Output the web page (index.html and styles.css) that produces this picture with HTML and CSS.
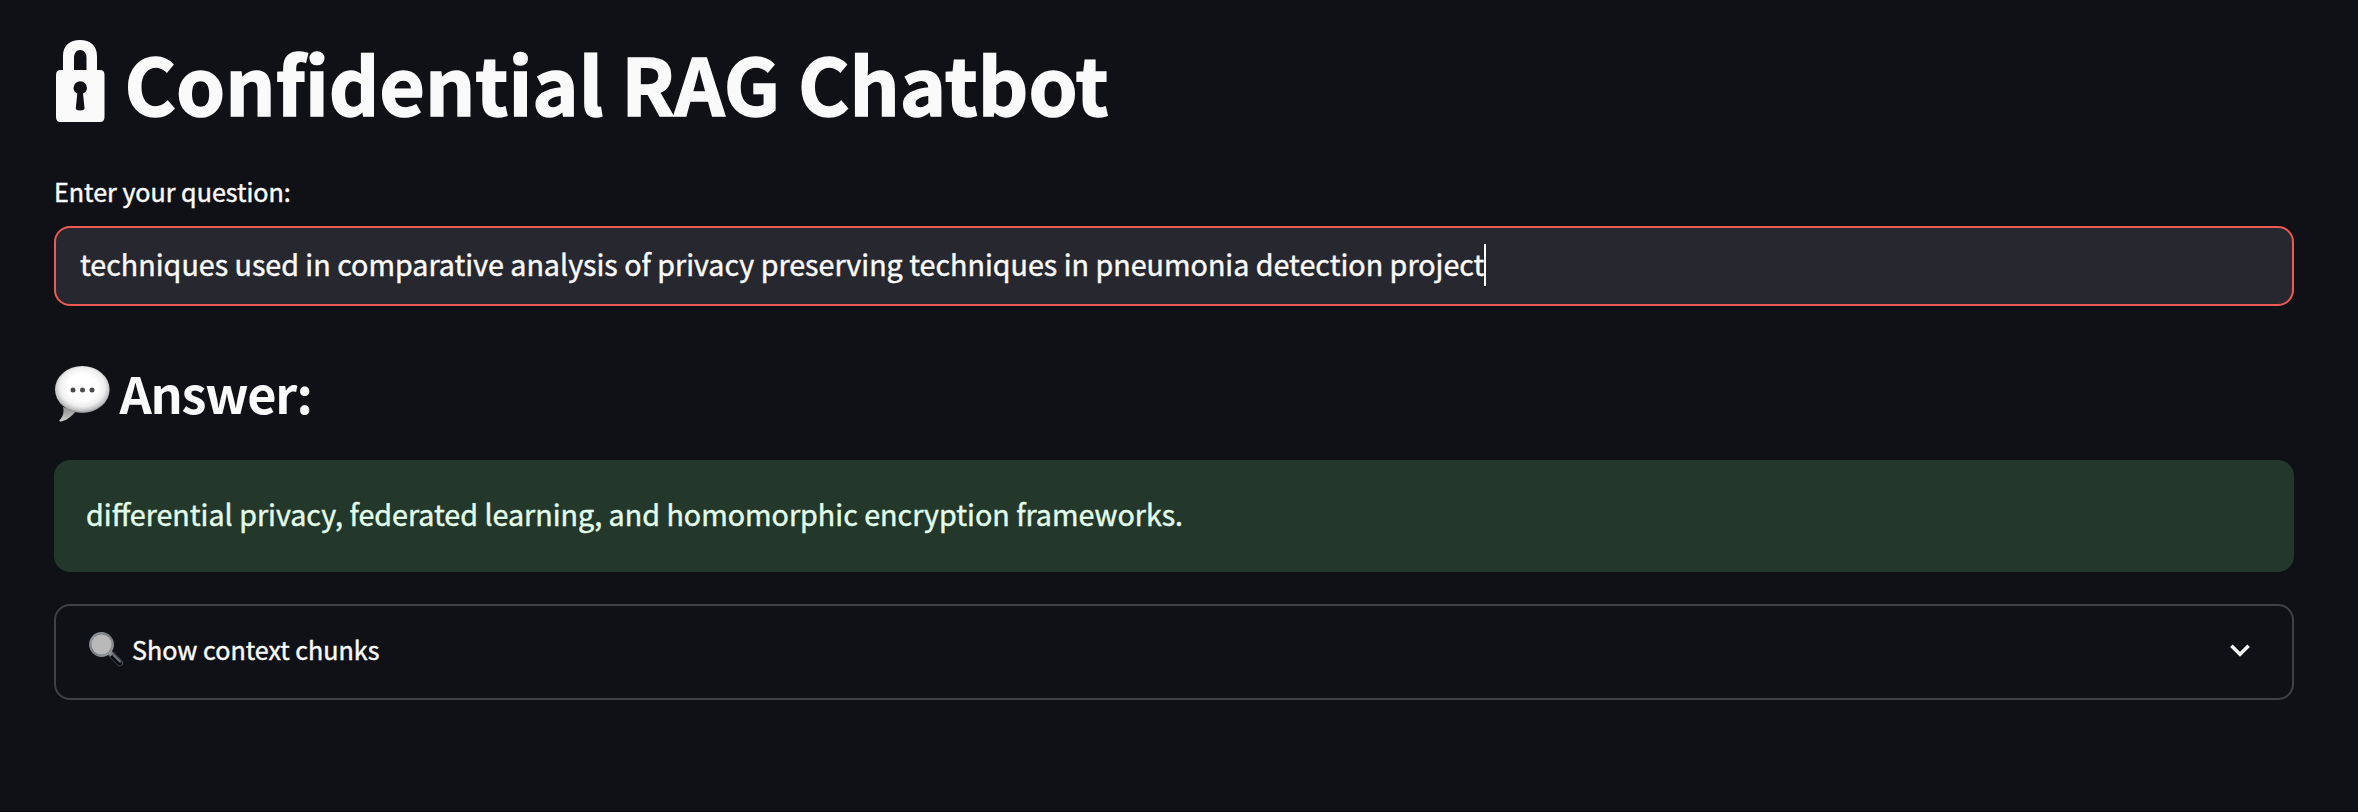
FILE: index.html
```html
<!DOCTYPE html>
<html lang="en">
<head>
<meta charset="utf-8">
<title>Confidential RAG Chatbot</title>
<link rel="stylesheet" href="styles.css">
</head>
<body>
<main class="page">
  <h1 class="title">
    <svg class="lock" viewBox="0 0 50 84" aria-hidden="true">
      <path fill="currentColor" fill-rule="evenodd" d="M8 31V17C8 6.500 15 1 25 1S42 6.500 42 17V31H45Q49.500 31 49.500 36V78Q49.500 83 45 83H5.500Q1 83 1 78V36Q1 31 5.500 31ZM19 31H31.500V19C31.500 14 29 11 25.200 11S19 14 19 19ZM22.300 54.500L20.800 69Q20.700 71.500 25.200 71.500T29.500 69L28 54.500Q32 52.500 32 49A6.700 6.700 0 1 0 18.500 49Q18.500 52.500 22.300 54.500Z"/>
    </svg>
    <span class="title-text">Confidential RAG Chatbot</span>
  </h1>
  <div class="label"><span>Enter your question:</span></div>
  <div class="field"><span class="field-text">techniques used in comparative analysis of privacy preserving techniques in pneumonia detection project</span><i class="caret"></i></div>
  <h2 class="subtitle">
    <svg class="bubble" viewBox="0 0 56 58" aria-hidden="true">
      <defs>
        <radialGradient id="bubbleFill" cx=".5" cy=".45" r=".55">
          <stop offset=".5" stop-color="#fff"/><stop offset=".75" stop-color="#eee"/><stop offset=".92" stop-color="#bdbdbd"/><stop offset="1" stop-color="#858585"/>
        </radialGradient>
        <linearGradient id="tailFill" x1="0" y1="0" x2="0" y2="1">
          <stop offset="0" stop-color="#8c8c8c"/><stop offset="1" stop-color="#cfcfcf"/>
        </linearGradient>
      </defs>
      <path fill="url(#tailFill)" d="M9 42C10.500 48 8.500 52 5.300 55.500Q5 57 8 56.300C14 54.500 18 51 22 46Z"/>
      <ellipse cx="28.300" cy="24.500" rx="27.300" ry="23.500" fill="url(#bubbleFill)"/>
      <g fill="#4b4b4b"><circle cx="19" cy="25" r="2.500"/><circle cx="28.500" cy="25" r="2.500"/><circle cx="38" cy="25" r="2.500"/></g>
    </svg>
    <span class="subtitle-text">Answer:</span>
  </h2>
  <div class="success"><span>differential privacy, federated learning, and homomorphic encryption frameworks.</span></div>
  <div class="expander">
    <svg class="glass" viewBox="0 0 36 36" aria-hidden="true">
      <defs>
        <linearGradient id="rim" x1="0" y1="0" x2="1" y2="1"><stop offset="0" stop-color="#a0a8b5"/><stop offset=".5" stop-color="#777c83"/><stop offset="1" stop-color="#a5a5a5"/></linearGradient>
      </defs>
      <path d="M23.500 23.500L31.800 32" stroke="#4a4d52" stroke-width="6.600" stroke-linecap="round"/>
      <path d="M24.500 25L31.600 32" stroke="#090a0c" stroke-width="4.800" stroke-linecap="round"/>
      <path d="M25.500 24L32 30.500" stroke="#6b7480" stroke-width="2.200" stroke-linecap="round"/>
      <path d="M21 21L24 24" stroke="#85888d" stroke-width="4"/>
      <circle cx="13.500" cy="13.500" r="12.400" fill="url(#rim)"/>
      <circle cx="13.500" cy="13.500" r="10.700" fill="#77797d"/>
      <circle cx="13.500" cy="13.500" r="10.100" fill="#b9b9ba"/>
    </svg>
    <span class="expander-text">Show context chunks</span>
    <svg class="chevron" viewBox="0 0 20 13" aria-hidden="true"><path d="M1.400 1.800L10 10.200L18.600 1.800" fill="none" stroke="#fafafa" stroke-width="3.600"/></svg>
  </div>
</main>
</body>
</html>
```
FILE: styles.css
```css
* { box-sizing: border-box; }
body {
  margin: 0;
  height: 812px;
  background: #0f1116;
  color: #fafafa;
  font-family: "Noto Sans CJK SC", "Open Sans", sans-serif;
  -webkit-text-stroke: 0.45px currentColor;
  border-bottom: 1px solid #050608;
}
.page { display: flex; flex-direction: column; padding: 28px 64px 0 54px; white-space: nowrap; }
.title { display: flex; align-items: flex-start; margin: 0; height: 106px; line-height: 108px; font-size: 78.6px; font-weight: 700; -webkit-text-stroke: 1.5px currentColor; }
.lock { width: 50px; height: 84px; margin: 11px 19.5px 0 1px; flex: none; }
.label { height: 42px; margin-top: 36px; line-height: 42px; font-size: 25.08px; }
.field { display: flex; align-items: center; height: 80px; margin-top: 14px; padding: 0 24px 5px; border: 2px solid #ed5953; border-radius: 16px; background: #27272f; font-size: 28.66px; }
.caret { width: 2px; height: 42px; margin-top: 3px; background: #fff; }
.subtitle { display: flex; align-items: flex-start; height: 68px; margin: 52px 0 34px; line-height: 70px; font-size: 50.4px; font-weight: 700; -webkit-text-stroke: 0; }
.subtitle-text { letter-spacing: -1.25px; }
.bubble { width: 56px; height: 58px; margin: 7px 9.5px 0 0; flex: none; }
.success { display: flex; align-items: center; height: 112px; padding: 0 32px 5px; border-radius: 16px; background: #23372b; color: #e2fde9; font-size: 28.66px; }
.expander { display: flex; align-items: center; height: 96px; margin-top: 32px; padding: 0 42px 0 32px; border: 2px solid #404145; border-radius: 16px; font-size: 25.08px; }
.glass { width: 36px; height: 36px; margin: -7px 8px 0 0; flex: none; }
.expander-text { padding-bottom: 6px; }
.chevron { width: 20px; height: 13px; margin-left: auto; margin-top: -4px; }
```
